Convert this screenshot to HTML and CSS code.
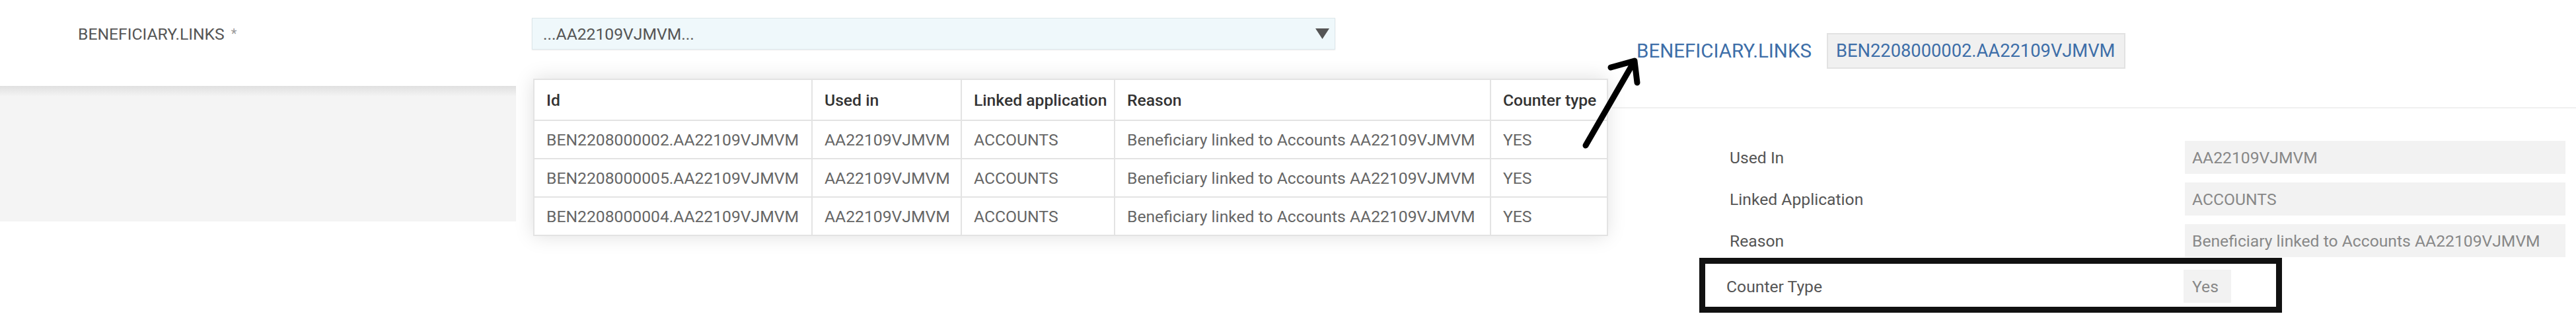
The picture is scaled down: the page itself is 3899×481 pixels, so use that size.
FILE: index.html
```html
<!DOCTYPE html>
<html>
<head>
  <title>Beneficiary Links</title>
  <link rel="stylesheet" href="styles.css">
</head>
<body>

<div class="page">

  <!-- Edit form with open dropdown -->
  <section class="form">
    <div class="field">
      <label class="field-label">BENEFICIARY.LINKS <span class="req">*</span></label>
      <div class="select">
        <span>...AA22109VJMVM...</span>
        <svg class="caret" width="21" height="16" viewBox="0 0 21 16"><polygon points="0,0 21,0 10.5,16" fill="#555"/></svg>

        <div class="dropdown">
          <table>
            <colgroup>
              <col style="width:421px"><col style="width:226px"><col style="width:232px"><col style="width:569px"><col style="width:177px">
            </colgroup>
            <thead>
              <tr><th>Id</th><th>Used in</th><th>Linked application</th><th>Reason</th><th>Counter type</th></tr>
            </thead>
            <tbody>
              <tr><td>BEN2208000002.AA22109VJMVM</td><td>AA22109VJMVM</td><td>ACCOUNTS</td><td>Beneficiary linked to Accounts AA22109VJMVM</td><td>YES</td></tr>
              <tr><td>BEN2208000005.AA22109VJMVM</td><td>AA22109VJMVM</td><td>ACCOUNTS</td><td>Beneficiary linked to Accounts AA22109VJMVM</td><td>YES</td></tr>
              <tr><td>BEN2208000004.AA22109VJMVM</td><td>AA22109VJMVM</td><td>ACCOUNTS</td><td>Beneficiary linked to Accounts AA22109VJMVM</td><td>YES</td></tr>
            </tbody>
          </table>
        </div>
      </div>
    </div>
    <div class="band"></div>
  </section>

  <!-- Record view -->
  <section class="detail">
    <div class="detail-head">
      <span class="detail-link">BENEFICIARY.LINKS</span>
      <span class="detail-id">BEN2208000002.AA22109VJMVM</span>
    </div>
    <div class="detail-rows">
      <div class="row"><span class="row-label">Used In</span><span class="row-value">AA22109VJMVM</span></div>
      <div class="row"><span class="row-label">Linked Application</span><span class="row-value">ACCOUNTS</span></div>
      <div class="row"><span class="row-label">Reason</span><span class="row-value">Beneficiary linked to Accounts AA22109VJMVM</span></div>
      <div class="row marked"><span class="row-label">Counter Type</span><span class="row-value">Yes</span></div>
    </div>
  </section>

  <!-- hand drawn arrow -->
  <svg class="arrow" width="100" height="150" viewBox="0 0 100 150">
    <path d="M10 140 L84 12 M48 22 L84 12 L88 45" fill="none" stroke="#000" stroke-width="9" stroke-linecap="round" stroke-linejoin="round"/>
  </svg>

</div>

</body>
</html>
```

FILE: styles.css
```css
body { margin: 0; font-family: Roboto, "Liberation Sans", sans-serif; font-size: 24.7px; color: #555; background: #fff; }
.page { position: relative; display: flex; width: 3899px; height: 481px; overflow: hidden; }

/* left: form */
.form { width: 2440px; flex: none; }
.field { display: flex; align-items: center; padding-top: 27px; }
.field-label { margin-left: 118px; width: 687px; flex: none; }
.req { color: #999; font-size: 20px; margin-left: 4px; vertical-align: 2px; }
.select {
  position: relative; width: 1216px; height: 48px; box-sizing: border-box;
  display: flex; align-items: center; justify-content: space-between;
  padding: 0 8px 0 16px; border: 1px solid #dce7eb; background: #eff8fb;
  box-shadow: 0 1px 2px rgba(0,0,0,.08);
}
.dropdown {
  position: absolute; left: 1px; top: 91px; width: 1625px; z-index: 2;
  background: #fff; box-shadow: 0 0 28px rgba(0,0,0,.13);
}
table { width: 100%; border-collapse: collapse; table-layout: fixed; }
th, td { border: 2px solid #e3e3e3; text-align: left; padding: 0 0 0 18px; white-space: nowrap; overflow: hidden; }
th { height: 60px; color: #333; font-weight: 500; }
td { height: 56px; color: #666; }
.band { margin-top: 55px; width: 781px; height: 205px; background: linear-gradient(#e0e0e0, #f4f4f4 16px); }

/* right: record view */
.detail { flex: 1; }
.detail-head { display: flex; align-items: center; padding: 50px 0 58px 37px; border-bottom: 2px solid #f0f0f0; }
.detail-link { color: #3d6ea8; font-size: 29.5px; margin-right: 23px; }
.detail-id {
  height: 54px; box-sizing: border-box; display: flex; align-items: center;
  padding: 0 14px 0 12px; border: 2px solid #e2e2e2; background: #f0f0f0;
  color: #3d6ea8; font-size: 27.3px;
}
.detail-rows { display: flex; flex-direction: column; gap: 13px; padding-top: 49px; }
.row { display: flex; align-items: center; margin-left: 178px; }
.row-label { width: 689px; flex: none; }
.row-value {
  width: 576px; height: 50px; box-sizing: border-box; display: flex; align-items: center;
  padding-left: 11px; background: #f2f2f2; color: #888; white-space: nowrap;
}
.row.marked { margin: -12px 0 0 132px; width: 882px; box-sizing: border-box; border: 9px solid #111; padding: 9px 0 6px 32px; }
.row.marked .row-label { width: 692px; }
.row.marked .row-value { width: 72px; padding-left: 13px; }

.arrow { position: absolute; left: 2390px; top: 80px; z-index: 3; }
```
